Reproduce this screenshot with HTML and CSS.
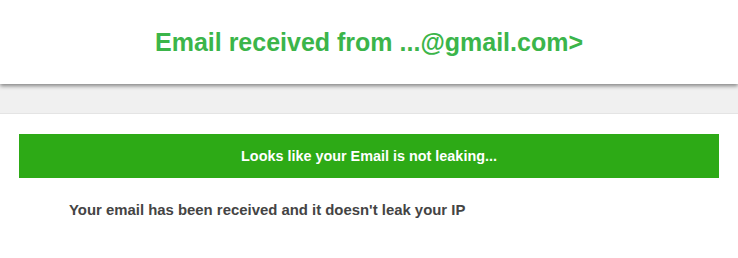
FILE: index.html
```html
<!doctype html>
<html lang="en">
<head>
    <meta charset="UTF-8">
    <title>Email leak test</title>
    <link rel="stylesheet" href="styles.css">
</head>
<body>
    <!--顶部标题-->
    <div class="header">
        <h1>Email received from ...@gmail.com&gt;</h1>
    </div>
    <!--灰色条-->
    <div class="band"></div>
    <!--结果-->
    <div class="result">
        <div class="status">Looks like your Email is not leaking...</div>
        <p class="detail">Your email has been received and it doesn't leak your IP</p>
    </div>
</body>
</html>
```

FILE: styles.css
```css
body,h1,p{
    margin: 0;
}
body{
    font-family: "Liberation Sans", Arial, sans-serif;
    background: #fff;
}
/*顶部*/
.header{
    height: 84px;
    display: flex;
    align-items: center;
    justify-content: center;
    background: #fff;
    box-shadow: 0 2px 4px rgba(0,0,0,.45);
    position: relative;
    z-index: 1;
}
.header h1{
    font-size: 25px;
    font-weight: bold;
    color: #3bb54a;
}
/*灰色条*/
.band{
    height: 29px;
    background: #f0f0f0;
    border-bottom: 1px solid #e4e4e4;
}
.result{
    padding: 20px 19px 0;
}
/*绿色提示*/
.status{
    height: 44px;
    display: flex;
    align-items: center;
    justify-content: center;
    background: #2daa16;
    color: #fff;
    font-size: 14.4px;
    font-weight: bold;
}
.detail{
    margin: 24px 0 0 50px;
    font-size: 14.9px;
    font-weight: bold;
    color: #444;
}
```
